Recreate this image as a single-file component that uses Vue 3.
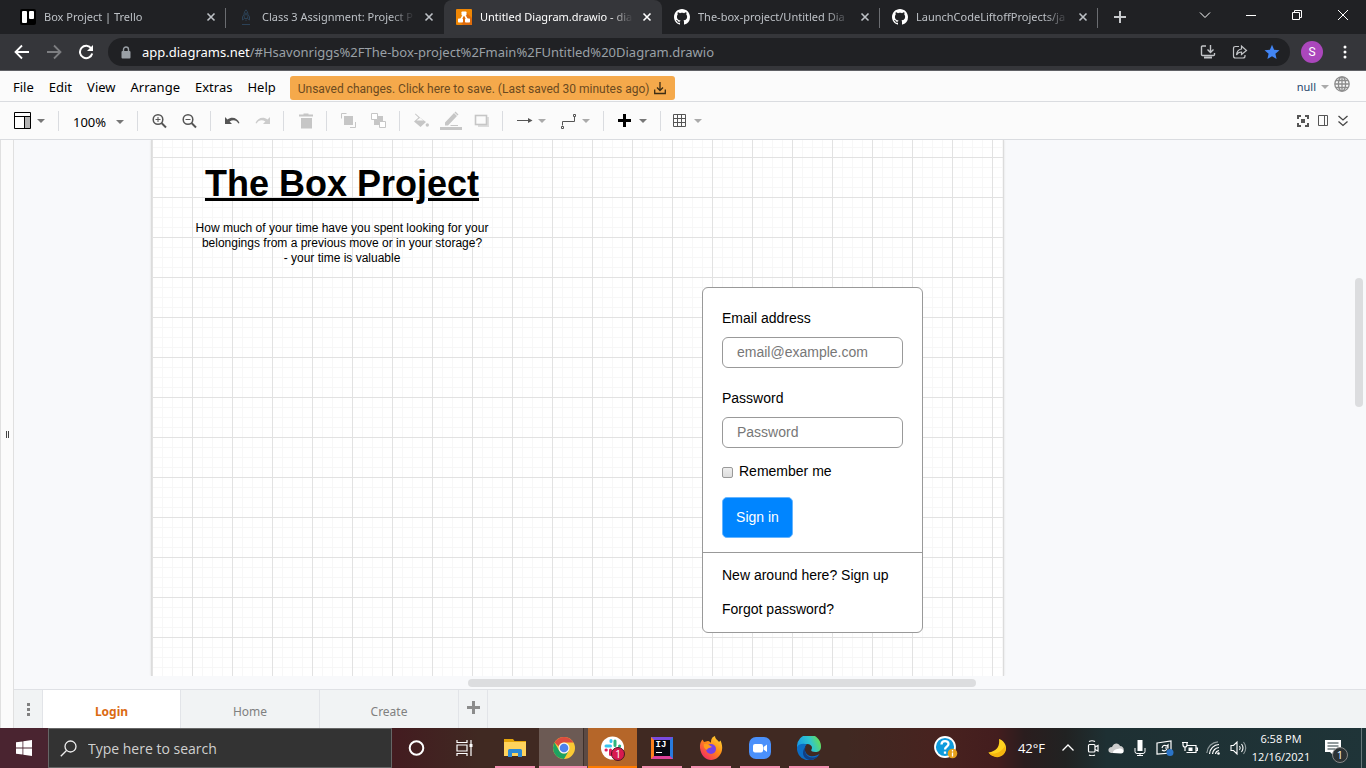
<script setup>
import { ref } from 'vue'

const tabs = [
  { title: 'Box Project | Trello', icon: 'trello' },
  { title: 'Class 3 Assignment: Project P', icon: 'rocket' },
  { title: 'Untitled Diagram.drawio - dia', icon: 'drawio', active: true },
  { title: 'The-box-project/Untitled Dia', icon: 'github' },
  { title: 'LaunchCodeLiftoffProjects/ja', icon: 'github' }
]
const menus = ['File', 'Edit', 'View', 'Arrange', 'Extras', 'Help']
const pages = ['Login', 'Home', 'Create']
const email = ref('')
const password = ref('')
const remember = ref(false)
const search = ref('')
</script>

<template>
  <div class="desktop">
    <header class="tabstrip">
      <div v-for="(t, i) in tabs" :key="i" class="tab" :class="{ active: t.active, divided: i !== 1 && i !== 2 }">
        <svg v-if="t.icon === 'trello'" class="fav" viewBox="0 0 16 16"><rect width="16" height="16" rx="2" fill="#000" /><rect x="2" y="2" width="5" height="12" rx="1" fill="#fff" /><rect x="9" y="2" width="5" height="8" rx="1" fill="#fff" /></svg>
        <svg v-else-if="t.icon === 'rocket'" class="fav" viewBox="0 0 16 16" fill="none" stroke="#2c4257"><path d="M8 .8C5.800 3 5.500 6 6.500 9.500h3C10.500 6 10.200 3 8 .8zM5.800 6L4.500 7.500V11l2-1.500M10.200 6l1.300 1.500V11l-2-1.500M8 10.500v1.500M4 15.500h8" /><circle cx="8" cy="5" r="1" /></svg>
        <svg v-else-if="t.icon === 'drawio'" class="fav" viewBox="0 0 16 16"><rect width="16" height="16" rx="1" fill="#f08705" /><path d="M10 3l6 6v7H7l-3-3z" fill="#df6c0c" /><path d="M8 5L4.500 11M8 5l3.500 6" stroke="#fff" stroke-width="1.500" /><rect x="5.500" y="2.500" width="5" height="4" rx=".7" fill="#fff" /><rect x="2" y="9.500" width="5" height="4" rx=".7" fill="#fff" /><rect x="9" y="9.500" width="5" height="4" rx=".7" fill="#fff" /></svg>
        <svg v-else class="fav" viewBox="0 0 16 16" fill="#fff"><path d="M8 0C3.580 0 0 3.580 0 8c0 3.540 2.290 6.530 5.470 7.590.4.070.55-.17.55-.38 0-.19-.01-.82-.01-1.490-2.010.37-2.530-.49-2.690-.94-.09-.23-.48-.94-.82-1.130-.28-.15-.68-.52-.01-.53.63-.01 1.080.58 1.230.82.72 1.210 1.870.87 2.330.66.07-.52.28-.87.51-1.070-1.780-.2-3.640-.89-3.640-3.950 0-.87.31-1.590.82-2.150-.08-.2-.36-1.020.08-2.120 0 0 .67-.21 2.200.82.64-.18 1.320-.27 2-.27s1.360.09 2 .27c1.530-1.040 2.200-.82 2.200-.82.44 1.100.16 1.920.08 2.120.51.56.82 1.270.82 2.150 0 3.070-1.870 3.750-3.650 3.950.29.25.54.73.54 1.480 0 1.070-.01 1.930-.01 2.200 0 .21.15.46.55.38A8.010 8.010 0 0 0 16 8c0-4.420-3.580-8-8-8z" /></svg>
        <span class="tab-title">{{ t.title }}</span>
        <button class="plain close" aria-label="Close tab"><svg width="10" height="10" viewBox="0 0 10 10" stroke="currentColor" stroke-width="1.600"><path d="M1.500 1.500l7 7M8.500 1.500l-7 7" /></svg></button>
      </div>
      <button class="plain newtab" aria-label="New tab"><svg width="14" height="14" viewBox="0 0 14 14" stroke="#c8cacd" stroke-width="2"><path d="M7 1v12M1 7h12" /></svg></button>
      <div class="winctl">
        <button class="plain" aria-label="Search tabs"><svg width="12" height="12" viewBox="0 0 12 12" fill="none" stroke="#fff"><path d="M1 3.500l5 5 5-5" /></svg></button>
        <button class="plain" aria-label="Minimize"><svg width="12" height="12" viewBox="0 0 12 12" stroke="#fff"><path d="M1 6.500h10" /></svg></button>
        <button class="plain" aria-label="Restore"><svg width="12" height="12" viewBox="0 0 12 12" fill="none" stroke="#fff"><path d="M1.500 3.500h7v7h-7zM3.500 3.500v-2h7v7h-2" /></svg></button>
        <button class="plain" aria-label="Close"><svg width="12" height="12" viewBox="0 0 12 12" stroke="#fff"><path d="M1 1l10 10M11 1L1 11" /></svg></button>
      </div>
    </header>

    <div class="navbar">
      <button class="plain nav" aria-label="Back"><svg width="16" height="16" viewBox="0 0 16 16" fill="none" stroke="#fff" stroke-width="1.800"><path d="M15 8H2M8 1.500L1.500 8 8 14.500" /></svg></button>
      <button class="plain nav" aria-label="Forward"><svg width="16" height="16" viewBox="0 0 16 16" fill="none" stroke="#7d7e81" stroke-width="1.800"><path d="M1 8h13M8 1.500L14.500 8 8 14.500" /></svg></button>
      <button class="plain nav" aria-label="Reload"><svg width="16" height="16" viewBox="0 0 16 16" fill="none" stroke="#fff" stroke-width="2"><path d="M13.300 4.500A6.200 6.200 0 1 0 14.200 9.500" /><path d="M15 1v6H9z" fill="#fff" stroke="none" /></svg></button>
      <div class="omnibox">
        <svg width="10" height="13" viewBox="0 0 10 13"><path d="M2.500 6V3.500a2.500 2.500 0 0 1 5 0V6" fill="none" stroke="#9aa0a6" stroke-width="1.400" /><rect x="0.500" y="5" width="9" height="7.500" rx="1" fill="#9aa0a6" /></svg>
        <span class="url"><b>app.diagrams.net</b>/#Hsavonriggs%2FThe-box-project%2Fmain%2FUntitled%20Diagram.drawio</span>
        <button class="plain oi" aria-label="Install"><svg width="16" height="16" viewBox="0 0 16 16" fill="none" stroke="#c3c5c8" stroke-width="1.400"><path d="M6 2H2.500Q1.500 2 1.500 3v7.500q0 1 1 1h11q1 0 1-1V9M10.500 1v7M7.500 5.500l3 3 3-3" /><path d="M4 13.500h8" stroke-width="2" /></svg></button>
        <button class="plain oi" aria-label="Share"><svg width="16" height="16" viewBox="0 0 16 16" fill="none" stroke="#c3c5c8" stroke-width="1.200"><path d="M7 2.500H3.500q-2 0-2 2V12q0 2 2 2H11q2 0 2-2v-1M9.500 5V2l5 4.500-5 4V8C7 8 5.500 9 4.500 11 4.800 7.500 6.500 5.500 9.500 5z" /></svg></button>
        <button class="plain oi" aria-label="Bookmark"><svg width="16" height="16" viewBox="0 0 16 16" fill="#4285f4"><path d="M8 .8l2.100 5 5.400.4-4.100 3.600 1.200 5.300L8 12.300l-4.600 2.800 1.200-5.300L.5 6.200l5.400-.4z" /></svg></button>
      </div>
      <button class="plain avatar">S</button>
      <button class="plain more" aria-label="Browser menu"><svg width="4" height="14" viewBox="0 0 4 14" fill="#fff"><circle cx="2" cy="2" r="1.500" /><circle cx="2" cy="7" r="1.500" /><circle cx="2" cy="12" r="1.500" /></svg></button>
    </div>

    <nav class="menubar">
      <button v-for="m in menus" :key="m" class="plain menu">{{ m }}</button>
      <button class="plain unsaved">Unsaved changes. Click here to save. (Last saved 30 minutes ago)
        <svg width="12" height="13" viewBox="0 0 12 13" fill="none" stroke="#3c2c14" stroke-width="1.300"><path d="M.7 7.500v4h10.600v-4M6 0v8.500M3 5.500l3 3 3-3" /></svg></button>
      <span class="grow"></span>
      <button class="plain user">null <i class="caret soft"></i></button>
      <button class="plain globe" aria-label="Language"><svg width="16" height="16" viewBox="0 0 16 16" fill="none" stroke="#8c8c8c" stroke-width="1.300"><circle cx="8" cy="8" r="7.200" /><ellipse cx="8" cy="8" rx="3.600" ry="7.200" /><path d="M8 1v14M1 8h14M2 4.500h12M2 11.500h12" /></svg></button>
    </nav>

    <div class="toolbar">
      <button class="plain drop" aria-label="View"><svg width="18" height="18" viewBox="0 0 18 18"><path d="M.5.5h16v16H.5zM.5 4.500h16M10.500 4.500v12" fill="#fff" stroke="#000" /><path d="M11 5h5v11h-5z" fill="#b3b3b3" /></svg><i class="caret"></i></button>
      <i class="sep"></i>
      <button class="plain percent">100% <i class="caret"></i></button>
      <i class="sep"></i>
      <button class="plain tool" aria-label="Zoom in"><svg width="16" height="16" viewBox="0 0 16 16" fill="none" stroke="#555" stroke-width="1.500"><circle cx="7" cy="6.500" r="4.800" /><path d="M10.500 10l4.500 4.500" stroke-width="2" /><path d="M7 4v5M4.500 6.500h5" stroke-width="1" /></svg></button>
      <button class="plain tool" aria-label="Zoom out"><svg width="16" height="16" viewBox="0 0 16 16" fill="none" stroke="#555" stroke-width="1.500"><circle cx="7" cy="6.500" r="4.800" /><path d="M10.500 10l4.500 4.500" stroke-width="2" /><path d="M4.500 6.500h5" stroke-width="1" /></svg></button>
      <i class="sep"></i>
      <button class="plain tool" aria-label="Undo"><svg width="16" height="16" viewBox="0 0 16 16" fill="#555"><path d="M1 4v7h7L5.600 8.600C9 6 12.500 7 14.500 10.500l1-.5C13.500 5 8 3 3.500 6.500z" /></svg></button>
      <button class="plain tool" aria-label="Redo"><svg width="16" height="16" viewBox="0 0 16 16" fill="#ccc"><path d="M16 4v7H9l2.400-2.400C8 6 4.500 7 2.500 10.500l-1-.5C3.500 5 9 3 13.500 6.500z" /></svg></button>
      <i class="sep"></i>
      <button class="plain tool" aria-label="Delete"><svg width="16" height="16" viewBox="0 0 16 16" fill="#c6c6c6"><path d="M2 1.500h4.500V.5h5v1H16v2H2zM4 5h11v10.500H4z" /></svg></button>
      <i class="sep"></i>
      <button class="plain tool" aria-label="To front"><svg width="16" height="16" viewBox="0 0 16 16"><path d="M1.500 5.500v-5h5M15.500 9v5.500H10" fill="none" stroke="#c6c6c6" /><rect x="4" y="3" width="9" height="9" fill="#c6c6c6" /></svg></button>
      <button class="plain tool" aria-label="To back"><svg width="16" height="16" viewBox="0 0 16 16"><rect x="4" y="3" width="9" height="9" fill="#c6c6c6" /><path d="M1.500.5h6v6h-6zM9.500 8.500h6v6h-6z" fill="#fff" stroke="#c6c6c6" /></svg></button>
      <i class="sep"></i>
      <button class="plain tool" aria-label="Fill color"><svg width="16" height="16" viewBox="0 0 16 16" fill="#c6c6c6"><path d="M2.500.5l5 4.500L13 9l-5.500 5L1 8.500 5.500 4.500 2 1.200z" /><path d="M3.500 7.500h7L7 4.800z" fill="#fbfbfb" /><circle cx="14.300" cy="12" r="1.700" /></svg></button>
      <button class="plain tool" aria-label="Line color"><svg width="22" height="20" viewBox="0 0 22 20" fill="#c6c6c6"><path d="M5 11.500L14 2l3 3-9 9.500H5zM14.500 1.500l1-1 3 3-1 1zM11 14h7v1h-8zM0 16h22v3H0z" /></svg></button>
      <button class="plain tool" aria-label="Shadow"><svg width="16" height="16" viewBox="0 0 16 16"><path d="M5 4h11v10H5z" fill="#ddd" /><rect x="2.500" y="2.500" width="11" height="9" fill="#fbfbfb" stroke="#c6c6c6" stroke-width="1.600" /></svg></button>
      <i class="sep"></i>
      <button class="plain drop" aria-label="Connection"><svg width="18" height="16" viewBox="0 0 18 16"><path d="M2 7.500h13" stroke="#555" /><path d="M13 5l4.500 2.500L13 10z" fill="#555" /></svg><i class="caret soft"></i></button>
      <button class="plain drop" aria-label="Waypoints"><svg width="18" height="16" viewBox="0 0 18 16" fill="none" stroke="#555"><path d="M3.500 12.500v-4h12v-5" /><path d="M2.500 13.500h2v2h-2zM14.500 1.500h2v2h-2z" fill="#fff" /></svg><i class="caret soft"></i></button>
      <i class="sep"></i>
      <button class="plain drop" aria-label="Insert"><svg width="18" height="14" viewBox="0 0 18 14"><path d="M8.500 0v13M2 6.500h13" stroke="#000" stroke-width="3" /></svg><i class="caret"></i></button>
      <i class="sep"></i>
      <button class="plain drop" aria-label="Table"><svg width="16" height="14" viewBox="0 0 16 14" fill="none" stroke="#555"><path d="M.5.5h12v12H.5zM4.500.5v12M8.500.5v12M.5 4.500h12M.5 8.500h12" /></svg><i class="caret soft"></i></button>
      <span class="grow"></span>
      <button class="plain side" aria-label="Fullscreen"><svg width="12" height="12" viewBox="0 0 12 12" fill="none" stroke="#555" stroke-width="2"><path d="M1 4V1h3M8 1h3v3M11 8v3H8M4 11H1V8" /><rect x="4" y="4" width="4" height="4" fill="#555" stroke="none" /></svg></button>
      <button class="plain side" aria-label="Format"><svg width="12" height="12" viewBox="0 0 12 12" fill="none" stroke="#555"><path d="M1.500.5h9v10h-9zM7.500.5v10" /></svg></button>
      <button class="plain side" aria-label="Collapse"><svg width="12" height="12" viewBox="0 0 12 12" fill="none" stroke="#444" stroke-width="1.300"><path d="M1.500 1l4.500 4 4.500-4M1.500 6.500l4.500 4 4.500-4" /></svg></button>
    </div>

    <main class="editor">
      <div class="splitter"><i></i></div>
      <div class="work">
        <div class="viewport">
          <div class="page">
            <div class="heading">
              <h1>The Box Project</h1>
              <p>How much of your time have you spent looking for your<br>belongings from a previous move or in your storage?<br>- your time is valuable</p>
            </div>
            <form class="card" @submit.prevent>
              <div class="fields">
                <label for="email">Email address</label>
                <input id="email" v-model="email" type="email" placeholder="email@example.com">
                <label for="password">Password</label>
                <input id="password" v-model="password" type="password" placeholder="Password">
                <div class="remember"><input id="remember" v-model="remember" type="checkbox"><label for="remember">Remember me</label></div>
                <button class="signin">Sign in</button>
              </div>
              <div class="links">
                <a href="#signup">New around here? Sign up</a>
                <a href="#forgot">Forgot password?</a>
              </div>
            </form>
          </div>
          <i class="vthumb"></i>
        </div>
        <div class="hscroll"><i class="hthumb"></i></div>
        <div class="pagetabs">
          <button class="plain dots" aria-label="Pages"><svg width="4" height="14" viewBox="0 0 4 14" fill="#808080"><path d="M1 1h3v3H1zM1 6h3v3H1zM1 11h3v3H1z" /></svg></button>
          <button v-for="(p, i) in pages" :key="p" class="plain pagetab" :class="{ current: i === 0 }">{{ p }}</button>
          <button class="plain dots" aria-label="Insert page"><svg width="14" height="16" viewBox="0 0 14 16"><path d="M7.500 0v13M1 6.500h13" stroke="#8c8c8c" stroke-width="3" /></svg></button>
        </div>
      </div>
    </main>

    <footer class="taskbar">
      <button class="plain start" aria-label="Start"><svg width="16" height="16" viewBox="0 0 16 16" fill="#fff"><path d="M0 2.300L6.500 1.400v6.200H0zM7.300 1.200L16 0v7.600H7.300zM0 8.400h6.500v6.200L0 13.700zM7.300 8.400H16V16l-8.700-1.200z" /></svg></button>
      <label class="search">
        <svg width="17" height="17" viewBox="0 0 17 17" fill="none" stroke="#eee" stroke-width="1.300"><circle cx="10.500" cy="6.500" r="5.500" /><path d="M6.500 10.500L.8 16.200" /></svg>
        <input v-model="search" type="text" placeholder="Type here to search" aria-label="Search">
      </label>
      <button class="plain task" aria-label="Cortana"><svg width="18" height="18" viewBox="0 0 18 18"><circle cx="8.500" cy="9" r="6.800" fill="none" stroke="#fff" stroke-width="2" /></svg></button>
      <button class="plain task" aria-label="Task view"><svg width="20" height="18" viewBox="0 0 20 18" fill="none" stroke="#fff" stroke-width="1.200"><path d="M1 1v2.500h10V1M1 17v-2.500h10V17M1 6h10v6H1zM15 1v16" /><path d="M13.500 5h3v3h-3z" fill="#fff" stroke="none" /></svg></button>
      <button class="plain task open" aria-label="File Explorer"><svg width="22" height="20" viewBox="0 0 22 20"><path d="M0 1h9l1.500 2H22v6H0z" fill="#e5a50a" /><path d="M0 4h22v14H0z" fill="#ffd35c" /><path d="M4 19v-6.500Q4 11 5.500 11h11q1.500 0 1.500 1.500V19h-4v-4H8v4z" fill="#2d8ad4" /></svg></button>
      <button class="plain task open focused" aria-label="Chrome"><svg width="24" height="24" viewBox="0 0 24 24"><circle cx="12" cy="12" r="11" fill="#fbc934" /><path d="M2.500 6.500A11 11 0 0 1 21.500 6.500H12a5.500 5.500 0 0 0-5.200 4z" fill="#db4c3f" /><path d="M2.500 6.500A11 11 0 0 0 12 23l4.800-8.300A5.500 5.500 0 0 1 7.200 14.700z" fill="#1da261" /><circle cx="12" cy="12" r="5.500" fill="#f4f4f4" /><circle cx="12" cy="12" r="4.300" fill="#4d82ec" /></svg></button>
      <button class="plain task alert" aria-label="Slack, 1 new"><svg width="24" height="24" viewBox="0 0 24 24" stroke-width="3" stroke-linecap="round"><circle cx="11.500" cy="12" r="11.500" fill="#fff" stroke="none" /><path d="M5 10h4.500M10 4.500v1" stroke="#36c5f0" /><path d="M14 5v4.500M18.500 10h.2" stroke="#2eb67d" /><path d="M9.500 14v4.500M5 14h.3" stroke="#e01e5a" /><path d="M14 14h4M14 18.500v.2" stroke="#ecb22e" /></svg><span class="badge">1</span></button>
      <button class="plain task open" aria-label="IntelliJ IDEA"><span class="idea">IJ</span></button>
      <button class="plain task open" aria-label="Firefox"><svg width="24" height="24" viewBox="0 0 24 24"><defs><linearGradient id="fx" x1="1" y1="0" x2=".2" y2="1"><stop offset="0" stop-color="#ffe43a" /><stop offset=".5" stop-color="#ff8a16" /><stop offset="1" stop-color="#f4246a" /></linearGradient></defs><path d="M1 12C.5 8 2 5 3.500 3.500L5 6l4-1c1 0 2.500 1 3 2 0-4 1-6 4-7 0 3 3 4 4 6l1.500-1.500C23 8 23.500 11 23 14 22 20 17 24 12 24S2 20 1 12z" fill="url(#fx)" /><circle cx="12" cy="13" r="5" fill="#7542e5" /><path d="M5 8c3-1 5 1 8 3-2 1-4 .5-5 3-2-1-4-3-3-6z" fill="#ff9b1c" /></svg></button>
      <button class="plain task open" aria-label="Zoom"><svg width="22" height="23" viewBox="0 0 22 23"><rect width="22" height="22" rx="7" fill="#4a90fb" /><rect x="4" y="7" width="10" height="8.500" rx="2" fill="#fff" /><path d="M14.500 10l3.500-2.500v7.500l-3.500-2.500z" fill="#fff" /></svg></button>
      <button class="plain task open" aria-label="Edge"><svg width="24" height="24" viewBox="0 0 24 24"><defs><linearGradient id="eg" x1="0" y1=".6" x2="1" y2=".3"><stop offset="0" stop-color="#1699e8" /><stop offset=".55" stop-color="#2fc5cf" /><stop offset="1" stop-color="#6be04a" /></linearGradient></defs><path d="M0 11A12 12 0 0 1 24 10c.3 4-2.500 6-5.500 6-3.500 0-5-1-4-2.500C16 11 14 8 10 8 5 8 1 10 0 14z" fill="url(#eg)" /><path d="M0 11C2 7.500 7 7 10 8.500 6.500 10 7 18 13 20c4 1 7-.5 9.500-2A12 12 0 0 1 0 11z" fill="#0c6dc4" /><path d="M9.500 10C6 14 9 22 16 21.500c3 0 5-1.500 6.500-3.500-2 4-6 6-10 6C5 23 4 14 9.500 10z" fill="#123f83" /></svg></button>
      <span class="grow"></span>
      <button class="plain help" aria-label="Get help"><svg width="24" height="24" viewBox="0 0 24 24"><circle cx="11" cy="11" r="10" fill="#0e9bdd" stroke="#fff" stroke-width="1.800" /><path d="M7.500 8.500C7.500 4 14.500 4 14.500 8c0 2.500-3.500 2.800-3.500 5.500M11 15.500v2.300" fill="none" stroke="#fff" stroke-width="2.300" /><circle cx="18.500" cy="17.500" r="4.800" fill="#e8a21c" /><path d="M18.500 16.500v4M18.500 14v1.500" stroke="#fff" stroke-width="1.300" /></svg></button>
      <button class="plain weather"><svg width="20" height="20" viewBox="0 0 20 20"><path d="M11 1c1 7-2 12-10.500 13.500C4 20 14 20.500 17.500 13 19.500 8 16 2.500 11 1z" fill="#ffd21f" /><path d="M.5 14.500C6 17 13 15 17 8c3 8-5 13-11 10.500Q2 17 .5 14.500z" fill="#f5b50f" /></svg>42°F</button>
      <div class="tray">
        <svg width="16" height="16" viewBox="0 0 16 16" fill="none" stroke="#fff" stroke-width="1.300"><path d="M2.500 10.500L8 5l5.500 5.500" /></svg>
        <svg width="16" height="16" viewBox="0 0 16 16" fill="none" stroke="#fff" stroke-width="1.200"><rect x="4.500" y="4.500" width="6.500" height="7.500" rx="1" /><path d="M11 7l3-1.500v5.500L11 9.500M5 1.500q3-1.500 6 0M5 15q3 1.500 6 0" /></svg>
        <svg width="16" height="16" viewBox="0 0 16 16"><path d="M1 12c-2-4 2-5 3-5 2-5 7-4 8-1 4 0 5 5 2 7H3z" fill="#ccc" /><path d="M5 13c0-3 3-4 5-4 5-2 8 4 3 4.500z" fill="#fff" /></svg>
        <svg width="16" height="16" viewBox="0 0 16 16"><rect x="5.500" y="0" width="5" height="11" fill="#fff" /><path d="M3 8v3.500q0 2 2 2h6q2 0 2-2V8M8 13v3M5 15.500h6" stroke="#fff" fill="none" /></svg>
        <svg width="18" height="16" viewBox="0 0 18 16" fill="none" stroke="#fff" stroke-width="1.200"><path d="M1 3l14-2v12L1 14zM6 8q1-4 5-2l1-1v3H9M11 9q-2 3-5 1" /><circle cx="14" cy="12.500" r="3.500" fill="#2b74c8" stroke="none" /></svg>
        <svg width="16" height="16" viewBox="0 0 16 16" fill="none" stroke="#fff" stroke-width="1.200"><path d="M5 5.500h9v7H4.500M14.500 8h1v2.500h-1M1 2v3q0 2 2 2t2-2V2M0 2.500h6M3 7v4" /><path d="M6.500 7.500h4v3.500h-4z" fill="#fff" stroke="none" /></svg>
        <svg width="16" height="16" viewBox="0 0 16 16" fill="none" stroke="#fff" stroke-width="1.200"><path d="M3.500 14A10 10 0 0 1 13 4.500M6.500 14A7 7 0 0 1 13 7.500M9.500 14A4 4 0 0 1 13 10.500" /><path d="M.8 13A12 12 0 0 1 12 1.800" stroke="#8f9a9c" /><circle cx="12.500" cy="13.500" r="1.300" fill="#fff" stroke="none" /></svg>
        <svg width="17" height="16" viewBox="0 0 17 16" fill="none" stroke="#fff" stroke-width="1.100"><path d="M1 5.500h2.500L7 2v12l-3.500-3.500H1zM9.500 6q1.500 2 0 4M11.500 4q3 4 0 8" /><path d="M13.500 2q4.500 6 0 12" stroke="#8f9a9c" /></svg>
      </div>
      <button class="plain clock"><span>6:58 PM</span><span>12/16/2021</span></button>
      <button class="plain notes" aria-label="Notifications, 1 new"><svg width="16" height="18" viewBox="0 0 16 18"><path d="M0 1h16v12H9v4l-4-4H0z" fill="#fff" /><path d="M2.500 4h11M2.500 7h11M2.500 10h8" stroke="#26393c" stroke-width="1.200" /></svg><span class="count">1</span></button>
      <i class="peek"></i>
    </footer>
  </div>
</template>

<style>
body { margin: 0; overflow: hidden; }
</style>

<style scoped>
* { box-sizing: border-box; }
.desktop { height: 100vh; display: flex; flex-direction: column; font: 13px/20px "Noto Sans", "Open Sans", sans-serif; color: #000; background: #fbfbfb; }
.plain { border: 0; padding: 0; margin: 0; background: none; font: inherit; color: inherit; display: flex; align-items: center; justify-content: center; flex: none; }
svg { flex: none; }
.grow { flex: 1; }

.tabstrip { height: 34px; flex: none; display: flex; background: #202124; color: #bdc1c6; padding-left: 8px; font-size: 11px; }
.tab { flex: 0 1 218px; min-width: 0; display: flex; align-items: center; padding: 0 9px 0 12px; gap: 8px; position: relative; }
.tab.divided::after { content: ""; position: absolute; right: 0; top: 8px; width: 1px; height: 20px; background: #6b6d71; }
.tab.active { background: #35363a; color: #fff; border-radius: 8px 8px 0 0; }
.fav { width: 16px; height: 16px; }
.tab-title { flex: 1; white-space: nowrap; overflow: hidden; mask-image: linear-gradient(90deg, #000 84%, transparent 100%); }
.close { width: 12px; height: 16px; }
.newtab { width: 44px; }
.winctl { margin-left: auto; display: flex; height: 29px; }
.winctl button { width: 46px; }

.navbar { height: 37px; flex: none; display: flex; align-items: center; background: #35363a; border-bottom: 1px solid #5f6065; padding: 0 6px; }
.nav { width: 32px; height: 32px; }
.omnibox { flex: 1; height: 28px; margin-left: 6px; border-radius: 14px; background: #202124; display: flex; align-items: center; padding: 0 10px 0 13px; color: #9aa0a6; font-size: 13px; }
.url { flex: 1; margin-left: 11px; white-space: nowrap; overflow: hidden; }
.url b { font-weight: 400; color: #fff; }
.oi { width: 16px; margin-left: 16px; }
.avatar { width: 22px; height: 22px; border-radius: 50%; background: #ab47bc; color: #fff; font: 12px Roboto, sans-serif; margin-left: 11px; }
.more { width: 30px; margin-left: 7px; }

.menubar { height: 31px; flex: none; display: flex; align-items: center; gap: 15px; padding: 0 16px 0 13px; border-bottom: 1px solid #dadce0; }
.menu { padding-top: 2px; }
.unsaved { height: 24px; margin-top: 3px; padding: 2px 9px 0 8px; gap: 5px; background: #f5a94b; border-radius: 3px; color: #6b4a20; font-family: Roboto, sans-serif; font-size: 12px; margin-left: -1px; }
.user { font-size: 11px; color: #26466b; gap: 5px; padding-top: 2px; margin-right: -10px; }
.globe { margin-top: -4px; }
.caret { width: 0; height: 0; border: 4px solid transparent; border-top-color: #777; border-bottom: 0; }
.caret.soft { border-top-color: #aaa; }

.toolbar { height: 38px; flex: none; display: flex; align-items: center; padding: 0 13px 0 8px; border-bottom: 1px solid #dadce0; }
.sep { width: 1px; height: 20px; margin: 0 6px; background: #dadce0; }
.tool { width: 30px; height: 30px; }
.drop { width: 44px; height: 30px; justify-content: flex-start; padding-left: 6px; gap: 5px; }
.percent { width: 66px; height: 30px; justify-content: flex-start; padding: 2px 0 0 8px; gap: 10px; }
.side { width: 20px; }

.editor { flex: 1; min-height: 0; display: flex; }
.splitter { width: 14px; flex: none; border: 1px solid #e0e0e0; border-width: 0 1px; display: flex; align-items: center; justify-content: center; }
.splitter i { width: 3px; height: 7px; border: 1px solid #444; border-width: 0 1px; }
.work { flex: 1; min-width: 0; display: flex; flex-direction: column; background: #f8f9fb; }
.viewport { flex: 1; min-height: 0; position: relative; overflow: hidden; padding-left: 137px; }
.page { width: 853px; height: 100%; position: relative; border: 1px solid #dcdcdc; border-width: 0 1px; box-shadow: 0 0 2px #ddd; background-color: #fff; background-image: linear-gradient(#e2e2e2 1px, transparent 1px), linear-gradient(90deg, #e2e2e2 1px, transparent 1px), linear-gradient(#f7f7f7 1px, transparent 1px), linear-gradient(90deg, #f7f7f7 1px, transparent 1px); background-size: 40px 40px, 40px 40px, 10px 10px, 10px 10px; background-position: 0 17px, 0 0, 0 7px, 0 0; font-family: "Liberation Sans", Arial, sans-serif; }
.heading { position: absolute; left: 30px; top: 21px; width: 320px; text-align: center; }
h1 { margin: 0; font-size: 36px; line-height: 46px; text-decoration: underline; white-space: nowrap; }
p { margin: 14px 0 0; font-size: 12px; line-height: 15px; }
.card { position: absolute; left: 550px; top: 147px; width: 221px; background: #fff; border: 1px solid #999; border-radius: 6px; font-size: 14px; line-height: 20px; }
.fields { padding: 20px 19px 14px; display: flex; flex-direction: column; align-items: flex-start; border-bottom: 1px solid #999; }
.fields > input { width: 100%; height: 31px; margin: 9px 0 20px; padding: 0 14px 2px; border: 1px solid #999; border-radius: 6px; background: #fff; font: inherit; }
.fields > input[type="password"] { margin-bottom: 13px; }
.fields > input::placeholder { color: #777; opacity: 1; }
.remember { display: flex; align-items: center; gap: 6px; }
.remember input { appearance: none; width: 11px; height: 11px; margin: 2px 0 0; border: 1px solid #999; border-radius: 2px; background: linear-gradient(#eee, #ddd); }
.signin { margin-top: 16px; width: 71px; height: 41px; border: 1px solid #66b5ff; border-radius: 5px; background: #0085ff; color: #fff; font: inherit; padding: 0 0 2px; }
.links { padding: 12px 19px 13px; display: flex; flex-direction: column; gap: 14px; }
.links a { color: #000; text-decoration: none; }
.vthumb { position: absolute; right: 3px; top: 138px; width: 8px; height: 129px; border-radius: 4px; background: #dcdddf; }
.hscroll { height: 13px; flex: none; padding: 3px 0 0 454px; }
.hthumb { display: block; width: 508px; max-width: 60%; height: 8px; border-radius: 4px; background: #dcdddf; }
.pagetabs { height: 39px; flex: none; display: flex; border-top: 1px solid #dfe1e5; background: #f1f3f4; color: #808080; font-size: 12px; }
.dots { width: 29px; border-right: 1px solid #e2e4e8; }
.pagetab { width: 139px; padding-top: 5px; border-right: 1px solid #e2e4e8; }
.pagetab.current { background: #fff; color: #db6a12; font-weight: 700; width: 138px; }

.taskbar { height: 40px; flex: none; display: flex; color: #fff; font-family: "Open Sans", "Noto Sans", sans-serif; background: linear-gradient(90deg, #4a2430 0, #4a2430 5%, #431c20 29%, #402922 35%, #402922 62%, #48221f 69%, #431d1e 73%, #2a1d1e 75%, #212222 78%, #1e3033 81%, #1f3438 100%); }
.start { width: 48px; }
.search { width: 344px; flex: 0 1 344px; border: 1px solid #666; background: #333; display: flex; align-items: center; padding-left: 11px; gap: 11px; }
.search input { flex: 1; min-width: 0; border: 0; padding: 0; background: none; color: #ddd; font: 14px "Open Sans", sans-serif; outline: 0; }
.search input::placeholder { color: #d0d0d0; opacity: 1; }
.task { width: 49px; position: relative; }
.task.open::after { content: ""; position: absolute; left: 5px; right: 4px; bottom: 0; height: 2px; background: #f48fb1; }
.task.focused { background: linear-gradient(90deg, #6c5a54 44px, #3e302b 44px, #3e302b 45px, #5c4a44 45px); }
.task.focused::after { left: 0; right: 1px; }
.task.alert { background: #b56629; box-shadow: inset 0 -2px #ff7b00; }
.badge { position: absolute; left: 23px; top: 19px; width: 14px; height: 14px; border-radius: 50%; border: 1px solid #4b1422; background: #d8194f; font-size: 10px; line-height: 12px; text-align: center; }
.idea { width: 22px; height: 22px; border: 3px solid #287bde; border-color: #7a4be0 #287bde #e0409a #fc801d; background: linear-gradient(#fff, #fff) 2px 12px / 6px 1px no-repeat #080812; font: bold 9px/11px "Liberation Mono", monospace; text-align: left; padding-left: 2px; }
.help { width: 24px; margin-right: 30px; }
.weather { width: 57px; gap: 10px; font-size: 13px; margin-right: 15px; }
.tray { display: flex; align-items: center; gap: 8px; }
.clock { width: 64px; margin-left: 2px; flex-direction: column; font-size: 11px; line-height: 18px; }
.notes { width: 48px; position: relative; justify-content: flex-start; padding-left: 12px; }
.count { position: absolute; left: 19px; top: 19px; width: 16px; height: 16px; border-radius: 50%; border: 1px solid #888; background: #2c3234; font-size: 11px; line-height: 14px; text-align: center; }
.peek { width: 1px; margin: 0 4px 0 0; background: #68777a; }
</style>
